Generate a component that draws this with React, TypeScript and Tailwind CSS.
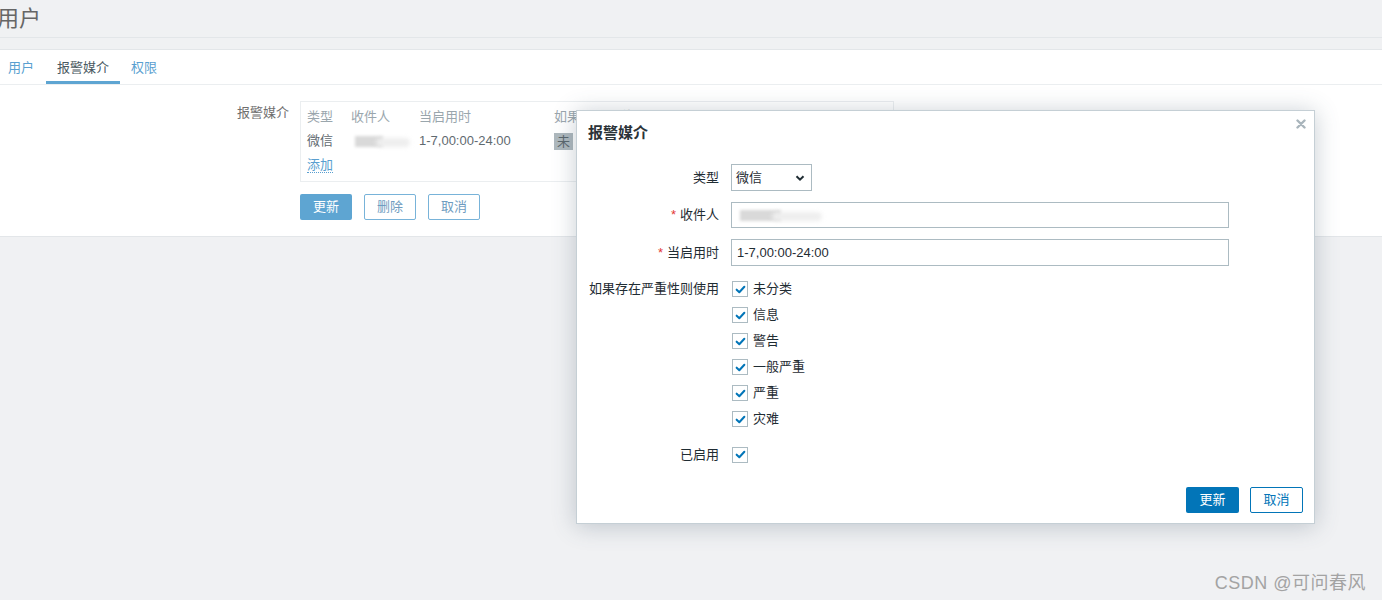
import React from 'react';

const font = { fontFamily: '"Liberation Sans", "Noto Sans CJK SC", Arial, sans-serif' };

const Check = () => (
  <span className="w-4 h-4 border border-[#acbbc2] bg-white flex items-center justify-center shrink-0">
    <svg viewBox="0 0 12 12" className="w-[11px] h-[11px]">
      <path d="M1.8 6.2 L4.7 9 L10.2 3" fill="none" stroke="#0275b8" strokeWidth="2.2" strokeLinecap="round" strokeLinejoin="round" />
    </svg>
  </span>
);

const Blur = ({ w }: { w: number }) => (
  <span className="relative inline-block h-[14px] align-middle" style={{ width: w }}>
    <span className="absolute left-[4px] top-[2px] h-[11px] w-[45%] bg-[#d9d9d9] blur-[1.5px]" />
    <span className="absolute left-[40%] top-[4px] h-[9px] w-[55%] bg-[#eeeeee] blur-[2px] rounded-full" />
  </span>
);

const severities = ['未分类', '信息', '警告', '一般严重', '严重', '灾难'];

export default function App() {
  return (
    <div className="relative min-h-[600px] bg-[#f0f1f3] text-[13px] text-[#1f2c33] overflow-hidden" style={font}>
      {/* header */}
      <div className="h-[38px] border-b border-[#e3e6e9] flex items-center">
        <h1 className="-ml-[3px] text-[22px] text-[#666] leading-none">用户</h1>
      </div>

      <div className="mt-[11px] bg-white border-t border-[#e3e6e9] border-b border-b-[#e3e6e9]">
        {/* tabs */}
        <div className="h-[35px] flex items-stretch border-b border-[#ebeef0]">
          <div className="pl-[8px] pr-[12px] pt-[1px] flex items-center text-[#5a9fd0]">用户</div>
          <div className="px-[11px] flex items-center text-[#4a5a62] border-b-[3px] border-[#5ea5d2] pt-[4px]">报警媒介</div>
          <div className="px-[11px] pt-[1px] flex items-center text-[#5a9fd0]">权限</div>
        </div>

        {/* form */}
        <div className="pt-[16px] pb-[16px]">
          <div className="flex">
            <div className="w-[289px] text-right text-[#6f6f6f] pt-[4px] leading-[16px]">报警媒介</div>
            <div className="ml-[11px]">
              <div className="w-[594px] h-[81px] border border-[#ebeef0] px-[6px] py-[3px]">
                <div className="h-[24px] flex items-center text-[#9aa6ad]">
                  <span className="w-[44px]">类型</span>
                  <span className="w-[68px]">收件人</span>
                  <span className="w-[135px]">当启用时</span>
                  <span className="whitespace-nowrap">如果存在严重性则使用</span>
                </div>
                <div className="h-[24px] flex items-center text-[#5f6a70]">
                  <span className="w-[44px]">微信</span>
                  <span className="w-[68px] flex items-center"><Blur w={62} /></span>
                  <span className="w-[135px]">1-7,00:00-24:00</span>
                  <span className="flex gap-[2px]">
                    <span className="bg-[#aeb8bd] text-[#5a666c] px-[3px] h-[17px] leading-[17px]">未</span>
                  </span>
                </div>
                <div className="h-[24px] flex items-center">
                  <span className="text-[#5a9fd0] border-b border-dotted border-[#5a9fd0] leading-[15px]">添加</span>
                </div>
              </div>
              <div className="mt-[12px] flex gap-[12px]">
                <button className="w-[52px] h-[26px] bg-[#5ea5d2] text-white rounded-[2px]">更新</button>
                <button className="w-[52px] h-[26px] border border-[#78b3d9] text-[#6f9cc0] rounded-[2px] bg-white">删除</button>
                <button className="w-[52px] h-[26px] border border-[#78b3d9] text-[#6f9cc0] rounded-[2px] bg-white">取消</button>
              </div>
            </div>
          </div>
        </div>
      </div>

      {/* modal */}
      <div className="absolute left-[576px] top-[110px] w-[739px] h-[414px] bg-white border border-[#c5cfd5] shadow-[0_2px_22px_rgba(70,90,110,0.3)] flex flex-col">
        <div className="relative h-[44px] flex items-center pl-[11px] pt-[1px]">
          <h4 className="text-[15px] font-bold text-[#2b3338]">报警媒介</h4>
          <svg viewBox="0 0 10 10" className="absolute right-[8px] top-[8px] w-[10px] h-[10px]">
            <path d="M1.5 1.5 L8.5 8.5 M8.5 1.5 L1.5 8.5" stroke="#a9b5bc" strokeWidth="2.4" strokeLinecap="round" />
          </svg>
        </div>

        <div className="pt-[9px] pl-[11px] flex flex-col gap-[11px]">
          <div className="flex items-center">
            <label className="w-[131px] text-right">类型</label>
            <div className="ml-[12px] w-[81px] h-[27px] border border-[#acbbc2] flex items-center justify-between pl-[4px] pr-[6px]">
              <span>微信</span>
              <svg viewBox="0 0 10 10" className="w-[10px] h-[10px]">
                <path d="M1.5 3.2 L5 6.7 L8.5 3.2" fill="none" stroke="#1f2c33" strokeWidth="2" />
              </svg>
            </div>
          </div>
          <div className="flex items-center">
            <label className="w-[131px] text-right"><span className="text-[#e33734] mr-[4px]">*</span>收件人</label>
            <div className="ml-[12px] w-[498px] h-[26px] border border-[#acbbc2] flex items-center pl-[4px]">
              <Blur w={90} />
            </div>
          </div>
          <div className="flex items-center">
            <label className="w-[131px] text-right"><span className="text-[#e33734] mr-[4px]">*</span>当启用时</label>
            <div className="ml-[12px] w-[498px] h-[27px] border border-[#acbbc2] flex items-center pl-[5px]">1-7,00:00-24:00</div>
          </div>
          <div className="flex items-start pt-[4px]">
            <label className="w-[131px] text-right leading-[16px]">如果存在严重性则使用</label>
            <div className="ml-[13px] flex flex-col gap-[10px]">
              {severities.map((s) => (
                <div key={s} className="flex items-center gap-[5px] h-[16px]">
                  <Check />
                  <span>{s}</span>
                </div>
              ))}
            </div>
          </div>
          <div className="flex items-center mt-[7px]">
            <label className="w-[131px] text-right">已启用</label>
            <div className="ml-[13px]"><Check /></div>
          </div>
        </div>

        <div className="mt-auto pb-[10px] pr-[11px] flex justify-end gap-[11px]">
          <button className="w-[53px] h-[26px] bg-[#0275b8] text-white rounded-[2px]">更新</button>
          <button className="w-[53px] h-[26px] border border-[#0275b8] text-[#0275b8] rounded-[2px] bg-white">取消</button>
        </div>
      </div>

      <div className="absolute right-[16px] top-[570px] text-[18px] tracking-[0.5px] text-[#a3a3a3]">CSDN @可问春风</div>
    </div>
  );
}
